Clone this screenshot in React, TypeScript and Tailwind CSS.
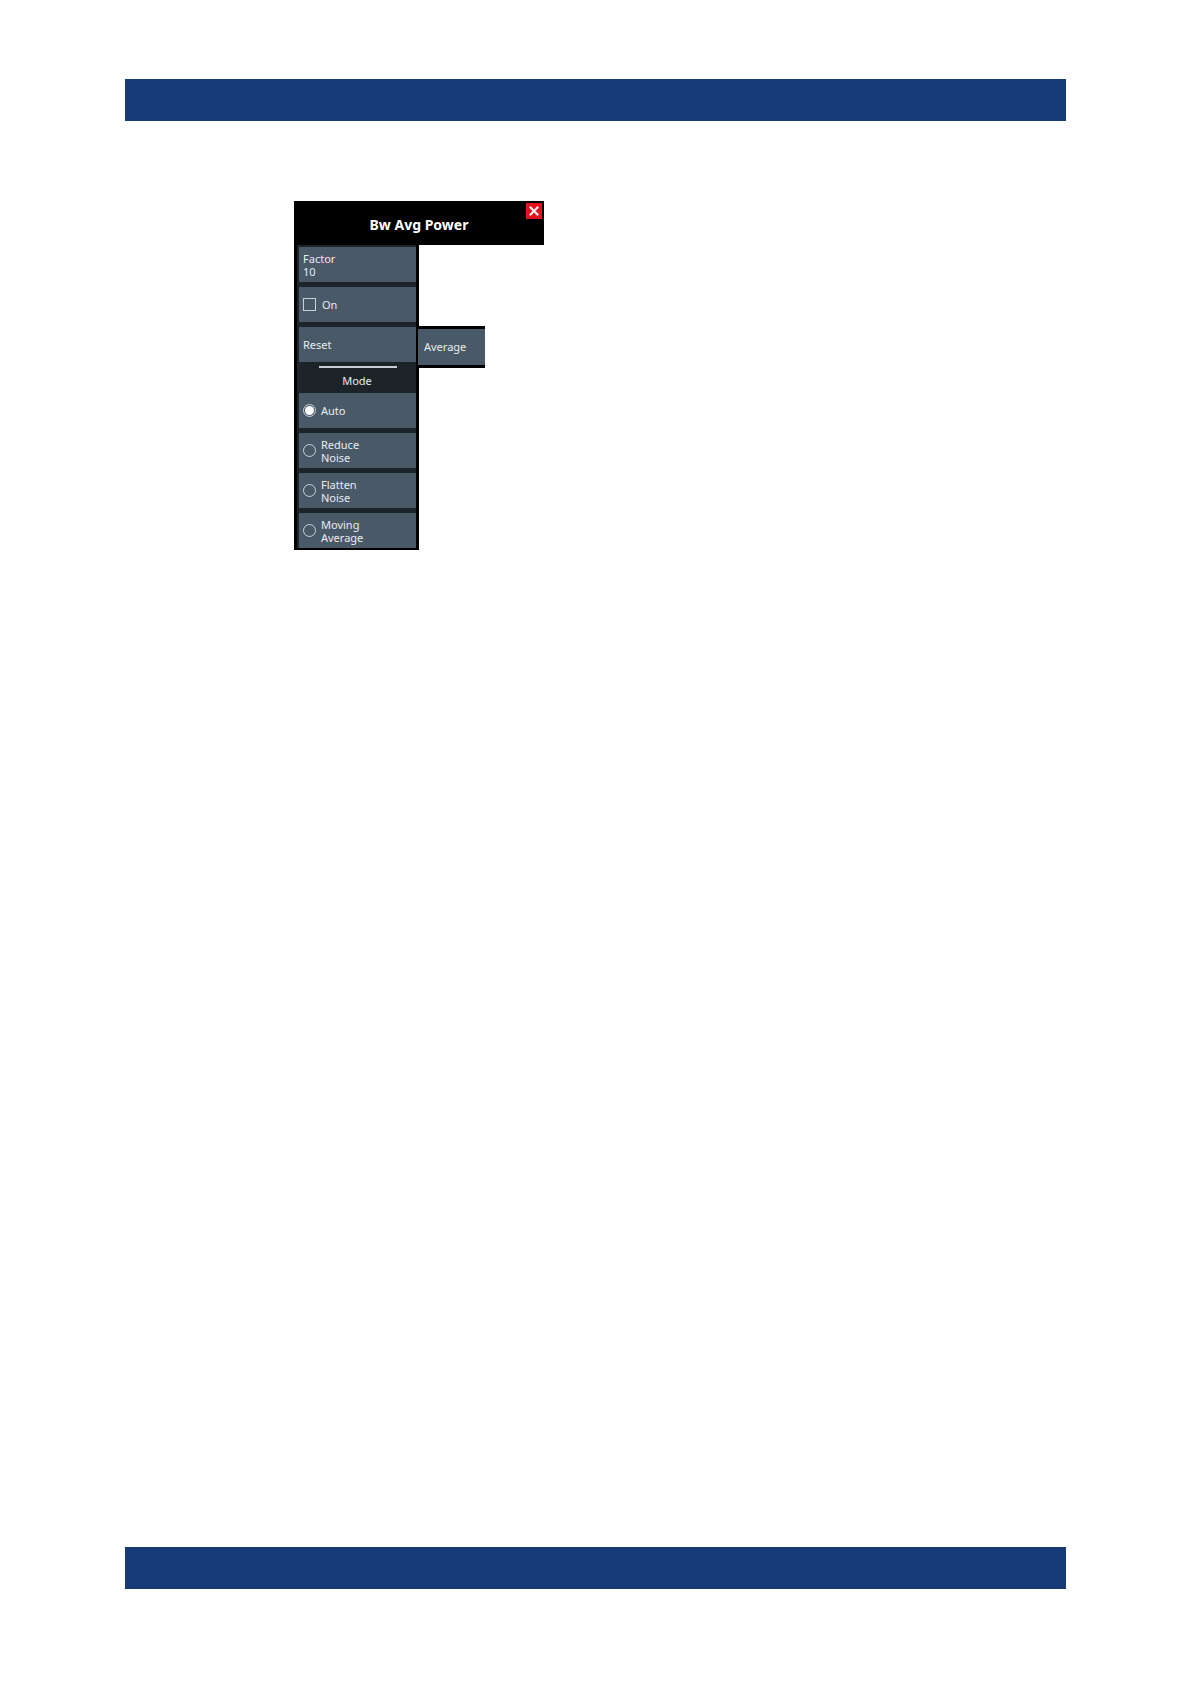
import React from "react";

const font = { fontFamily: '"Noto Sans", "Open Sans", sans-serif' };

function Btn({ children, className = "" }: { children: React.ReactNode; className?: string }) {
  return (
    <div
      className={
        "h-[35px] w-[117px] bg-[#4a5967] text-[#e8ecef] text-[11px] leading-[13px] flex items-center px-[4px] " +
        className
      }
    >
      {children}
    </div>
  );
}

function Radio({ checked }: { checked?: boolean }) {
  return (
    <span className="w-[13px] h-[13px] rounded-full border border-[#c9d0d6] flex items-center justify-center mr-[5px] shrink-0">
      {checked && <span className="w-[9px] h-[9px] rounded-full bg-white" />}
    </span>
  );
}

export default function App() {
  return (
    <div className="min-h-[1684px] bg-white flex flex-col" style={font}>
      <div className="mt-[79px] ml-[125px] w-[941px] h-[42px] bg-[#183a77]" />

      <div className="mt-[80px] ml-[294px] w-[250px]">
        <div className="relative h-[44px] bg-black flex items-center justify-center">
          <span className="text-white text-[14px] font-bold mt-[3px]">Bw Avg Power</span>
          <div className="absolute right-[2px] top-[2px] w-[16px] h-[16px] bg-[#e3121c] flex items-center justify-center">
            <svg width="10" height="10" viewBox="0 0 10 10">
              <path d="M1.5 1.5 L8.5 8.5 M8.5 1.5 L1.5 8.5" stroke="white" strokeWidth="2" strokeLinecap="square" />
            </svg>
          </div>
        </div>

        <div className="flex items-start">
          <div className="w-[125px] bg-[#1d2429] border-l-[3px] border-r-[3px] border-b-[2px] border-black pl-[2px] pt-[2px] flex flex-col gap-[5px]">
            <Btn>
              <div className="flex flex-col">
                <span>Factor</span>
                <span>10</span>
              </div>
            </Btn>
            <Btn>
              <span className="w-[13px] h-[13px] border border-[#c9d0d6] mr-[6px] shrink-0" />
              <span>On</span>
            </Btn>
            <div className="flex flex-col">
              <Btn>Reset</Btn>
              <div className="h-[26px] flex flex-col items-center">
                <div className="mt-[4px] w-[78px] h-[2px] bg-[#c8ced3]" />
                <span className="mt-[6px] text-[11px] leading-[13px] text-[#e8ecef] pr-[1px]">Mode</span>
              </div>
            </div>
            <Btn>
              <Radio checked />
              <span>Auto</span>
            </Btn>
            <Btn>
              <Radio />
              <div className="flex flex-col">
                <span>Reduce</span>
                <span>Noise</span>
              </div>
            </Btn>
            <Btn>
              <Radio />
              <div className="flex flex-col">
                <span>Flatten</span>
                <span>Noise</span>
              </div>
            </Btn>
            <Btn>
              <Radio />
              <div className="flex flex-col">
                <span>Moving</span>
                <span>Average</span>
              </div>
            </Btn>
          </div>

          <div className="mt-[81px] -ml-[1px] w-[67px] h-[42px] bg-[#4a5967] border-y-[3px] border-black flex items-center pl-[6px] text-[11px] text-[#e8ecef]">
            Average
          </div>
        </div>
      </div>

      <div className="flex-1" />
      <div className="ml-[125px] w-[941px] h-[42px] bg-[#183a77] mb-[95px]" />
    </div>
  );
}
